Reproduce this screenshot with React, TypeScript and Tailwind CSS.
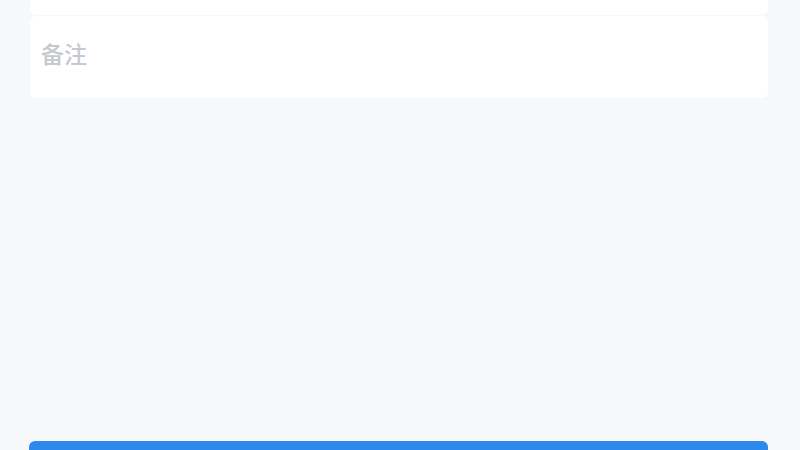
export default function App() {
  return (
    <div className="h-[450px] overflow-hidden bg-[#f7f8fa] pl-[30px] pr-[32px]" style={{ fontFamily: '"Noto Sans CJK SC", "Noto Sans", sans-serif' }}>
      {/* previous field, mostly scrolled off */}
      <div className="mt-[-40px] h-[55px] rounded-md bg-white" />

      {/* remark field */}
      <div className="mt-[1px] h-[82px] rounded-md bg-white px-[11px] pt-[21px]">
        <textarea
          placeholder="备注"
          className="h-[40px] w-full resize-none bg-transparent text-[23px] font-medium leading-[32px] text-[#333] outline-none placeholder:text-[#c5c8ce]"
        />
      </div>

      {/* submit */}
      <button className="ml-[-1px] mt-[343px] h-[46px] w-[calc(100%+1px)] rounded-md bg-[#2e89ec]" aria-label="保存" />
    </div>
  );
}
